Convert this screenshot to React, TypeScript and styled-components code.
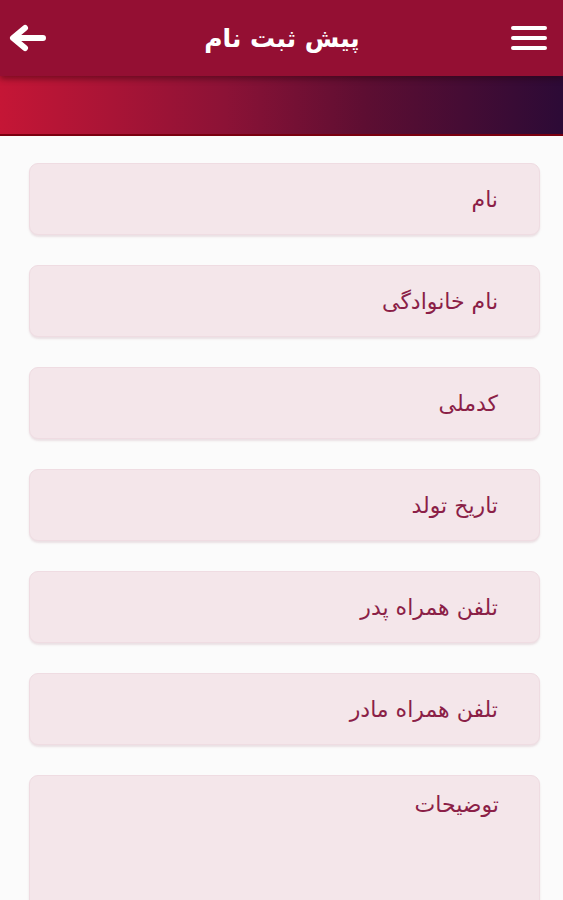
import React from "react";
import styled, { createGlobalStyle } from "styled-components";

const GlobalStyle = createGlobalStyle`
    html, body {
        margin: 0;
        padding: 0;
        background: #fbfbfb;
        font-family: "DejaVu Sans", "Noto Sans", sans-serif;
    }
    * {
        box-sizing: border-box;
    }
`

const Page = styled.div`
    width: 563px;
    height: 900px;
    overflow: hidden;
    background: #fbfbfb;
    display: flex;
    flex-direction: column;
`

const TopBar = styled.header`
    height: 76px;
    flex-shrink: 0;
    background: #940f33;
    display: flex;
    align-items: center;
    justify-content: space-between;
    padding: 0 14px 0 7px;
    position: relative;
    z-index: 1;
    box-shadow: 0 3px 6px rgba(40, 0, 10, 0.45);
`

const Title = styled.h1`
    margin: 0;
    color: #ffffff;
    font-size: 25px;
    font-weight: bold;
    direction: rtl;
    padding-left: 8px;
`

const IconButton = styled.button`
    background: none;
    border: none;
    padding: 0;
    width: 40px;
    height: 40px;
    display: flex;
    align-items: center;
    justify-content: center;
`

const Band = styled.div`
    height: 60px;
    flex-shrink: 0;
    background: linear-gradient(90deg, #c51636 0%, #8c1236 40%, #5d0e32 65%, #2c0a36 100%);
    border-bottom: 2px solid #7a0010;
`

const Form = styled.form`
    display: flex;
    flex-direction: column;
    gap: 30px;
    padding: 27px 23px 0 29px;
    direction: rtl;
`

const Field = styled.div<{ $tall?: boolean }>`
    height: ${p => p.$tall ? "150px" : "72px"};
    flex-shrink: 0;
    background: #f4e6ea;
    border: 1px solid #efdce2;
    border-radius: 9px;
    box-shadow: 0 2px 2px rgba(150, 80, 100, 0.15);
    display: flex;
    align-items: ${p => p.$tall ? "flex-start" : "center"};
    padding: ${p => p.$tall ? "16px 40px 0 0" : "0 41px 0 0"};
    color: #8b1f47;
    font-size: 22px;
`

const fields = [
    "نام",
    "نام خانوادگی",
    "کدملی",
    "تاریخ تولد",
    "تلفن همراه پدر",
    "تلفن همراه مادر",
];

const App = () => {
    return (
        <>
            <GlobalStyle />
            <Page>
                <TopBar>
                    <IconButton>
                        <svg width="40" height="30" viewBox="0 0 40 30">
                            <path d="M36 15 H8 M18 5 L6 15 L18 25" stroke="#fff" strokeWidth="6" strokeLinecap="round" strokeLinejoin="round" fill="none" />
                        </svg>
                    </IconButton>
                    <Title>پیش ثبت نام</Title>
                    <IconButton>
                        <svg width="36" height="28" viewBox="0 0 36 28">
                            <path d="M2 4 H34 M2 14 H34 M2 24 H34" stroke="#fff" strokeWidth="4" strokeLinecap="round" />
                        </svg>
                    </IconButton>
                </TopBar>
                <Band />
                <Form>
                    {fields.map(f => <Field key={f}>{f}</Field>)}
                    <Field $tall>توضیحات</Field>
                </Form>
            </Page>
        </>
    )
}

export default App;
